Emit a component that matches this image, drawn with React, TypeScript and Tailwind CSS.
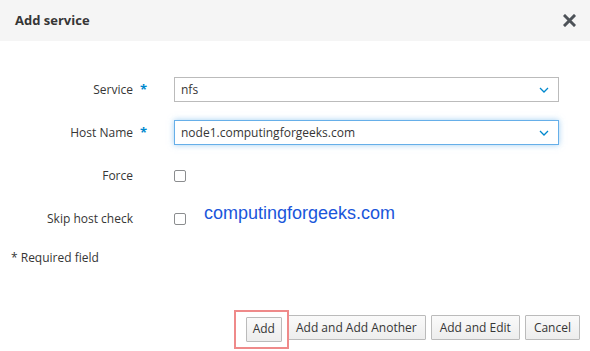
const font = { fontFamily: '"Open Sans", "Liberation Sans", sans-serif' };

const Chevron = () => (
  <svg width="10" height="6" viewBox="0 0 10 6" className="shrink-0">
    <polyline points="1,1 5,5 9,1" fill="none" stroke="#0088ce" strokeWidth="1.3" />
  </svg>
);

const CloseIcon = () => (
  <svg width="13" height="13" viewBox="0 0 13 13">
    <path d="M2 2 L11 11 M11 2 L2 11" stroke="#4d5258" strokeWidth="3" strokeLinecap="square" />
  </svg>
);

const Row = ({ label, required, children }: { label: string; required?: boolean; children: React.ReactNode }) => (
  <div className="flex h-[25px] items-center">
    <div className="w-[133px] text-right text-[12px] text-[#363636]">{label}</div>
    <div className="w-[41px] pl-[7px] text-[13px] font-bold text-[#0088ce]">{required ? "*" : ""}</div>
    {children}
  </div>
);

const Select = ({ value, focused }: { value: string; focused?: boolean }) => (
  <div
    className={
      focused
        ? "mr-[31px] flex h-[25px] flex-1 items-center justify-between border border-[#66afe9] bg-white pl-[6px] pr-[9px] shadow-[0_0_6px_rgba(102,175,233,0.6)]"
        : "mr-[31px] flex h-[25px] flex-1 items-center justify-between border border-[#bbbbbb] bg-white pl-[6px] pr-[9px]"
    }
  >
    <span className="text-[12px] text-[#363636]">{value}</span>
    <Chevron />
  </div>
);

const Checkbox = () => (
  <div className="h-[12px] w-[12px] rounded-[2px] border border-[#8b8d8f] bg-white" />
);

const Button = ({ children, narrow }: { children: React.ReactNode; narrow?: boolean }) => (
  <button
    className={
      narrow
        ? "h-[25px] rounded-[1px] border border-[#bbbbbb] bg-gradient-to-b from-[#fafafa] to-[#ededed] px-[6px] text-[12px] text-[#363636]"
        : "h-[25px] rounded-[1px] border border-[#bbbbbb] bg-gradient-to-b from-[#fafafa] to-[#ededed] px-[8px] text-[12px] text-[#363636]"
    }
  >
    {children}
  </button>
);

export default function App() {
  return (
    <div className="h-[351px] w-[590px] overflow-hidden bg-white" style={font}>
      <div className="flex h-[41px] items-center justify-between bg-[#f5f5f5] pl-[15px] pr-[14px]">
        <h1 className="text-[13px] font-bold text-[#363636]">Add service</h1>
        <CloseIcon />
      </div>
      <div className="flex flex-col gap-[18px] pt-[36px]">
        <Row label="Service" required>
          <Select value="nfs" />
        </Row>
        <Row label="Host Name" required>
          <Select value="node1.computingforgeeks.com" focused />
        </Row>
        <Row label="Force">
          <Checkbox />
        </Row>
        <Row label="Skip host check">
          <Checkbox />
          <span
            className="mb-[10px] ml-[18px] text-[18px] text-[#1a56db]"
            style={{ fontFamily: '"Liberation Sans", Arial, sans-serif' }}
          >
            computingforgeeks.com
          </span>
        </Row>
      </div>
      <p className="pl-[11px] pt-[18px] text-[12px] text-[#363636]">* Required field</p>
      <div className="flex justify-end gap-[5px] pr-[10px] pt-[48px]">
        <div className="relative">
          <Button narrow>Add</Button>
          <div className="pointer-events-none absolute -top-[5px] -right-[7px] -bottom-[7px] -left-[12px] border-2 border-[#ef8a8a]" />
        </div>
        <Button>Add and Add Another</Button>
        <Button>Add and Edit</Button>
        <Button>Cancel</Button>
      </div>
    </div>
  );
}
